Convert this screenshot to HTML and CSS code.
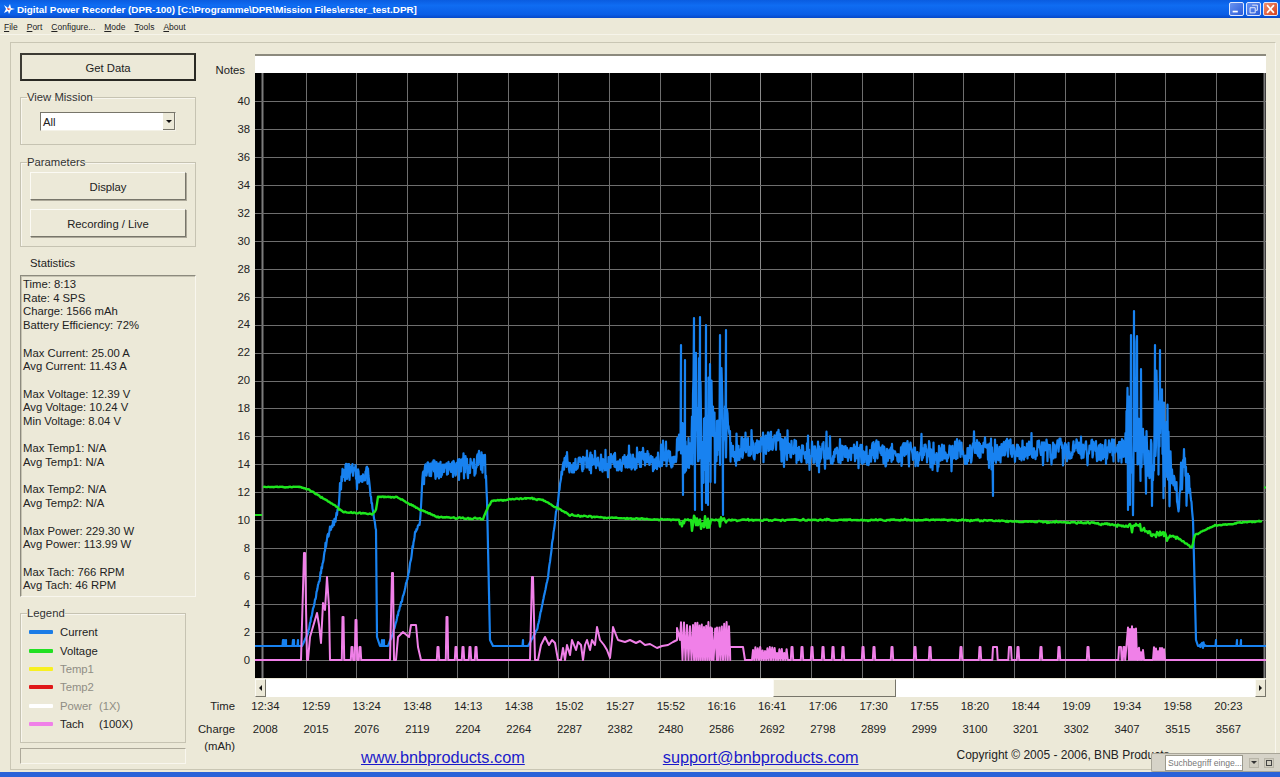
FILE: index.html
```html
<!DOCTYPE html>
<html lang="de">
<head>
<meta charset="UTF-8">
<title>Digital Power Recorder (DPR-100)</title>
<link rel="stylesheet" href="styles.css">
</head>
<body>
<div class="window">
  <div class="titlebar">
    <svg class="appicon" viewBox="0 0 12 12"><path d="M1 2 L5 5 L7 1 L8 5 L12 6 L8 7 L6 11 L5 8 L1 10 L3 6 Z" fill="#fff"/><path d="M4 5 L8 6 L5 7 Z" fill="#c33"/></svg>
    <span class="titletext">Digital Power Recorder (DPR-100) [C:\Programme\DPR\Mission Files\erster_test.DPR]</span>
    <div class="winbtns">
      <span class="winbtn"><svg viewBox="0 0 15 14"><rect x="3" y="9" width="6" height="2" fill="#fff"/></svg></span>
      <span class="winbtn"><svg viewBox="0 0 15 14"><path d="M6 2.5h6v6h-2M3.500 5.500h6v6h-6z" fill="none" stroke="#fff"/></svg></span>
      <span class="winbtn close"><svg viewBox="0 0 15 14"><path d="M3.500 2.500l8 9M11.500 2.500l-8 9" fill="none" stroke="#fff" stroke-width="2"/></svg></span>
    </div>
  </div>
  <div class="menubar">
    <span><u>F</u>ile</span>
    <span><u>P</u>ort</span>
    <span><u>C</u>onfigure...</span>
    <span><u>M</u>ode</span>
    <span><u>T</u>ools</span>
    <span><u>A</u>bout</span>
  </div>
  <div class="client">
    <div class="frame">
      <div class="sidebar">
        <button class="btn default">Get Data</button>
        <fieldset class="group mission">
          <legend>View Mission</legend>
          <div class="combo"><span>All</span><i class="combo-arrow"></i></div>
        </fieldset>
        <fieldset class="group params">
          <legend>Parameters</legend>
          <button class="btn">Display</button>
          <button class="btn">Recording / Live</button>
        </fieldset>
        <div class="stats-title">Statistics</div>
        <div class="stats">
          <p>Time: 8:13<br>Rate: 4 SPS<br>Charge: 1566 mAh<br>Battery Efficiency: 72%</p>
          <p>Max Current: 25.00 A<br>Avg Current: 11.43 A</p>
          <p>Max Voltage: 12.39 V<br>Avg Voltage: 10.24 V<br>Min Voltage: 8.04 V</p>
          <p>Max Temp1: N/A<br>Avg Temp1: N/A</p>
          <p>Max Temp2: N/A<br>Avg Temp2: N/A</p>
          <p>Max Power: 229.30 W<br>Avg Power: 113.99 W</p>
          <p>Max Tach: 766 RPM<br>Avg Tach: 46 RPM</p>
        </div>
        <fieldset class="group legendbox">
          <legend>Legend</legend>
          <div class="lg"><i class="sw blue"></i><span>Current</span></div>
          <div class="lg"><i class="sw green"></i><span>Voltage</span></div>
          <div class="lg off"><i class="sw yellow"></i><span>Temp1</span></div>
          <div class="lg off"><i class="sw red"></i><span>Temp2</span></div>
          <div class="lg off"><i class="sw white"></i><span>Power</span><span>(1X)</span></div>
          <div class="lg"><i class="sw pink"></i><span>Tach</span><span>(100X)</span></div>
        </fieldset>
        <div class="status"></div>
      </div>
      <div class="main">
        <div class="notes-row">
          <label>Notes</label>
          <div class="notes"></div>
        </div>
        <div class="chart-row">
          <div class="yaxis">
            <span>40</span><span>38</span><span>36</span><span>34</span><span>32</span><span>30</span><span>28</span>
            <span>26</span><span>24</span><span>22</span><span>20</span><span>18</span><span>16</span><span>14</span>
            <span>12</span><span>10</span><span>8</span><span>6</span><span>4</span><span>2</span><span>0</span>
          </div>
          <svg id="chart" class="chart" viewBox="255 73 1011 605"></svg>
        </div>
        <div class="hscroll">
          <span class="sb-btn"><i class="arrow-l"></i></span>
          <div class="sb-track"><div class="sb-thumb"></div></div>
          <span class="sb-btn"><i class="arrow-r"></i></span>
        </div>
        <div class="axis time">
          <label>Time</label>
          <span>12:34</span><span>12:59</span><span>13:24</span><span>13:48</span><span>14:13</span>
          <span>14:38</span><span>15:02</span><span>15:27</span><span>15:52</span><span>16:16</span>
          <span>16:41</span><span>17:06</span><span>17:30</span><span>17:55</span><span>18:20</span>
          <span>18:44</span><span>19:09</span><span>19:34</span><span>19:58</span><span>20:23</span>
        </div>
        <div class="axis charge">
          <label>Charge<br>(mAh)</label>
          <span>2008</span><span>2015</span><span>2076</span><span>2119</span><span>2204</span>
          <span>2264</span><span>2287</span><span>2382</span><span>2480</span><span>2586</span>
          <span>2692</span><span>2798</span><span>2899</span><span>2999</span><span>3100</span>
          <span>3201</span><span>3302</span><span>3407</span><span>3515</span><span>3567</span>
        </div>
        <div class="footer">
          <a href="#">www.bnbproducts.com</a>
          <a href="#">support@bnbproducts.com</a>
          <span class="copyright">Copyright © 2005 - 2006, BNB Products</span>
        </div>
      </div>
    </div>
  </div>
  <div class="taskbar"></div>
  <div class="searchbar">
    <div class="search-input">Suchbegriff einge...</div>
    <span class="search-btn"><i class="arrow-d"></i></span>
    <span class="search-btn"><i class="square"></i></span>
  </div>
</div>
<script src="chart.js"></script>
</body>
</html>
```
FILE: styles.css
```css
html, body {
    margin: 0;
    padding: 0;
    height: 777px;
    overflow: hidden;
}

body {
    font-family: "Liberation Sans", Arial, sans-serif;
    font-size: 11.3px;
    color: #222;
    background: #ece9d8;
}

.window {
    position: relative;
    display: flex;
    flex-direction: column;
    width: 1280px;
    height: 777px;
}

/* title bar */
.titlebar {
    display: flex;
    align-items: center;
    flex: none;
    height: 18px;
    padding-left: 3px;
    background: linear-gradient(#0a5ce0, #0f6cf2 30%, #0a5ee6 80%, #0648c8);
}

.appicon {
    width: 12px;
    height: 12px;
    margin-right: 2px;
}

.titletext {
    color: #fff;
    font-size: 9.85px;
    font-weight: bold;
    white-space: nowrap;
}

.winbtns {
    display: flex;
    gap: 2px;
    margin-left: auto;
    margin-right: 2px;
}

.winbtn {
    width: 15px;
    height: 14px;
    border: 1px solid #dfe8ff;
    border-radius: 2px;
    box-sizing: border-box;
    background: linear-gradient(135deg, #6a94f0, #2a5ad8);
}

.winbtn svg {
    display: block;
    width: 100%;
    height: 100%;
}

.winbtn.close {
    background: linear-gradient(135deg, #f09070, #d8401c);
}

/* menu */
.menubar {
    display: flex;
    flex: none;
    gap: 9px;
    height: 17px;
    padding-left: 4px;
    font-size: 8.5px;
    line-height: 18px;
    border-bottom: 1px solid #f6f4ea;
    box-sizing: border-box;
}

.client {
    flex: 1;
    padding: 7px 4px 2px 10px;
    min-height: 0;
}

.frame {
    display: flex;
    height: 100%;
    box-sizing: border-box;
    padding: 10px 0 0 9px;
    border-top: 1px solid #c9c6b4;
    border-left: 1px solid #c9c6b4;
    border-right: 1px solid #f8f6ee;
    border-bottom: 1px solid #c9c6b4;
}

/* left column */
.sidebar {
    display: flex;
    flex-direction: column;
    flex: none;
    width: 176px;
}

.btn {
    display: block;
    width: 156px;
    height: 28px;
    padding: 1px 0 0;
    font: 11.3px "Liberation Sans", Arial, sans-serif;
    color: #222;
    background: #ece9d8;
    border: 1px solid;
    border-color: #fbfaf4 #77756a #77756a #fbfaf4;
    box-shadow: 1px 1px 0 #aca899;
}

.btn.default {
    width: 176px;
    height: 28px;
    border: 2px solid #2e2d28;
    border-color: #3c3b34 #2a2924 #2a2924 #3c3b34;
    box-shadow: none;
}

.group {
    margin: 0;
    padding: 0;
    box-sizing: border-box;
    border: 1px solid #c6c3b2;
    box-shadow: inset 1px 1px 0 #f8f6ee;
}

.group legend {
    padding: 0;
    line-height: 14px;
    color: #333;
}

.mission {
    height: 55px;
    margin-top: 9px;
    padding: 8px 0 0 19px;
}

.mission legend {
    margin-left: -13px;
}

.combo {
    display: flex;
    align-items: center;
    justify-content: space-between;
    width: 136px;
    height: 19px;
    padding-left: 2px;
    box-sizing: border-box;
    background: #fff;
    border: 1px solid;
    border-color: #77756a #f4f2e8 #f4f2e8 #77756a;
}

.combo-arrow {
    position: relative;
    width: 12px;
    height: 17px;
    background: #ece9d8;
    border-right: 1px solid #77756a;
    border-bottom: 1px solid #77756a;
    box-sizing: border-box;
}

.combo-arrow::after {
    content: "";
    position: absolute;
    left: 3px;
    top: 7px;
    border: 3px solid transparent;
    border-top: 3px solid #111;
    border-bottom: 0;
}

.params {
    height: 92px;
    margin-top: 10px;
    padding: 3px 0 0 9px;
}

.params legend {
    margin-left: -3px;
}

.params .btn + .btn {
    margin-top: 9px;
}

.stats-title {
    margin: 9px 0 5px 10px;
    line-height: 14px;
}

.stats {
    height: 322px;
    box-sizing: border-box;
    padding: 2px 2px;
    line-height: 13.7px;
    border: 1px solid;
    border-color: #8c8a7e #f8f6ee #f8f6ee #8c8a7e;
    box-shadow: inset 1px 1px 0 #c6c3b2;
}

.stats p {
    margin: 0 0 13.7px;
}

.legendbox {
    width: 166px;
    height: 137px;
    margin-top: 9px;
    padding: 3px 0 0 8px;
}

.legendbox legend {
    margin-left: -2px;
}

.lg {
    display: flex;
    align-items: center;
    height: 18.4px;
}

.lg span:nth-of-type(1) {
    width: 39px;
    margin-left: 7px;
}

.lg.off {
    color: #8f8d84;
}

.sw {
    width: 24px;
    height: 4px;
    border-radius: 1px;
}

.sw.blue { background: #1b7ce6; }
.sw.green { background: #22e022; }
.sw.yellow { background: #f8f020; }
.sw.red { background: #e01818; }
.sw.white { background: #fff; }
.sw.pink { background: #f080e8; }

.status {
    width: 166px;
    height: 16px;
    margin-top: 5px;
    box-sizing: border-box;
    border: 1px solid;
    border-color: #aca899 #f8f6ee #f8f6ee #aca899;
}

/* right part */
.main {
    display: flex;
    flex-direction: column;
    flex: none;
    width: 1070px;
}

.notes-row {
    display: flex;
    align-items: center;
    height: 19px;
    margin-top: 1px;
}

.notes-row label {
    flex: none;
    width: 59px;
    text-align: right;
    padding-right: 10px;
    box-sizing: border-box;
    position: relative;
    top: 6px;
}

.notes {
    width: 1011px;
    height: 19px;
    box-sizing: border-box;
    background: #fff;
    border-top: 2px solid #8c8a7e;
}

.chart-row {
    display: flex;
    height: 605px;
}

.yaxis {
    display: grid;
    grid-auto-rows: 27.95px;
    align-items: center;
    width: 59px;
    padding-top: 14px;
    padding-right: 5px;
    box-sizing: border-box;
    justify-items: end;
}

.chart {
    display: block;
    width: 1011px;
    height: 605px;
    background: #000;
}

.hscroll {
    display: flex;
    width: 1011px;
    height: 18px;
    margin-left: 59px;
    margin-top: 1px;
}

.sb-btn {
    position: relative;
    flex: none;
    width: 11px;
    box-sizing: border-box;
    background: #ece9d8;
    border: 1px solid;
    border-color: #fbfaf4 #77756a #77756a #fbfaf4;
}

.arrow-l, .arrow-r {
    position: absolute;
    top: 5px;
    left: 3px;
    border: 3px solid transparent;
    border-left: 0;
    border-right: 3px solid #111;
}

.arrow-r {
    border-right: 0;
    border-left: 3px solid #111;
}

.sb-track {
    display: flex;
    flex: 1;
    padding-left: 507px;
    background: #fff;
}

.sb-thumb {
    width: 123px;
    box-sizing: border-box;
    background: #ece9d8;
    border: 1px solid;
    border-color: #fbfaf4 #77756a #77756a #fbfaf4;
}

.axis {
    display: flex;
    line-height: 14px;
}

.axis label {
    flex: none;
    width: 39px;
    margin-right: 5px;
    text-align: right;
    white-space: nowrap;
    line-height: 17px;
}

.axis span {
    flex: none;
    width: 50.7px;
    text-align: center;
}

.time {
    height: 18px;
    align-items: center;
}

.charge {
    height: 27px;
    margin-top: 1px;
    padding-top: 5px;
}

.charge span {
    margin-top: 1px;
}

.footer {
    display: flex;
    height: 18px;
    font-size: 16.3px;
    line-height: 18px;
}

.footer a {
    color: #1a1acb;
}

.footer a:nth-child(1) {
    margin-left: 165px;
}

.footer a:nth-child(2) {
    margin-left: 138px;
}

.copyright {
    position: relative;
    top: -2px;
    margin-left: 98px;
    font-size: 12px;
    white-space: nowrap;
}

.taskbar {
    flex: none;
    height: 5px;
    background: #2a62d8;
}

/* floating search bar of the desktop */
.searchbar {
    position: absolute;
    right: 0;
    bottom: 5px;
    display: flex;
    align-items: center;
    gap: 5px;
    width: 129px;
    height: 19px;
    box-sizing: border-box;
    padding-left: 13px;
    background: #d6d3c8;
    border: 1px solid #a8a598;
    border-right: 0;
    border-radius: 2px 0 0 2px;
}

.search-input {
    width: 78px;
    height: 16px;
    margin-right: 1px;
    box-sizing: border-box;
    padding-left: 2px;
    font-size: 8.6px;
    line-height: 15px;
    color: #777;
    background: #fff;
    border: 1px solid #9a988c;
    white-space: nowrap;
}

.search-btn {
    position: relative;
    width: 10px;
    height: 10px;
    background: #d0cdc0;
    border: 1px solid #b8b5a8;
    box-sizing: border-box;
}

.arrow-d {
    position: absolute;
    left: 1px;
    top: 2px;
    border: 3px solid transparent;
    border-top: 3px solid #333;
    border-bottom: 0;
}

.square {
    position: absolute;
    left: 1px;
    top: 1px;
    width: 6px;
    height: 6px;
    box-sizing: border-box;
    border: 1px solid #444;
}
```
FILE: chart.js
```js
// draws the recorder traces on the black chart (pixel coordinates of the window)
const svg = document.getElementById("chart");
const NS = "http://www.w3.org/2000/svg";

let seed = 12345;
function rnd() {
    seed = (seed * 16807) % 2147483647;
    return seed / 2147483647;
}

function line(x1, y1, x2, y2, color, width) {
    const l = document.createElementNS(NS, "line");
    l.setAttribute("x1", x1);
    l.setAttribute("y1", y1);
    l.setAttribute("x2", x2);
    l.setAttribute("y2", y2);
    l.setAttribute("stroke", color);
    l.setAttribute("stroke-width", width);
    svg.appendChild(l);
}

function poly(points, color, width) {
    const p = document.createElementNS(NS, "polyline");
    p.setAttribute("points", points.map(q => q[0].toFixed(1) + "," + q[1].toFixed(1)).join(" "));
    p.setAttribute("fill", "none");
    p.setAttribute("stroke", color);
    p.setAttribute("stroke-width", width);
    p.setAttribute("stroke-linejoin", "round");
    svg.appendChild(p);
}

// grid
const vLines = [306, 356, 407, 457, 508, 558, 609, 660, 710, 760, 811, 862, 913, 963, 1014, 1065, 1115, 1165, 1216];
for (const x of vLines) line(x + 0.5, 73, x + 0.5, 678, x === 760 ? "#8a8a8a" : "#6e6e6e", 1);
line(262.5, 73, 262.5, 678, "#7c7c7c", 2);
line(1264.5, 73, 1264.5, 678, "#7c7c7c", 2);
for (let v = 0; v <= 40; v += 2) {
    const y = Math.round(660 - v * 13.975) + 0.5;
    line(255, y, 1266, y, "#6e6e6e", 1);
}

// builds a noisy trace from knots [x, y, noise] and extra one-sample spikes [x, y]
function trace(knots, spikes, step) {
    const pts = [];
    for (let i = 0; i < knots.length - 1; i++) {
        const a = knots[i], b = knots[i + 1];
        for (let x = a[0]; x < b[0]; x += step) {
            const t = (x - a[0]) / (b[0] - a[0]);
            const amp = a[2] + (b[2] - a[2]) * t;
            let r = rnd() - 0.5;
            if (rnd() < 0.15) r *= 2;
            const slow = Math.sin(x * 0.31) * Math.sin(x * 0.07) * 0.2;
            pts.push([x, a[1] + (b[1] - a[1]) * t + amp * (r + slow)]);
        }
    }
    pts.push(knots[knots.length - 1].slice(0, 2));
    for (const s of spikes) {
        const i = pts.findIndex(q => q[0] >= s[0]);
        pts.splice(i, 0, [s[0], s[1]]);
    }
    return pts;
}

const current = trace([
    [255, 646, 0], [302, 646, 0], [308, 633, 2], [320, 577, 4], [327, 540, 6], [337, 513, 5],
    [342, 473, 18], [368, 474, 18], [371, 500, 4], [376, 530, 3], [377, 637, 0], [380, 646, 0],
    [388, 646, 0], [393, 633, 2], [408, 577, 3], [415, 533, 5], [420, 523, 5], [423, 470, 14],
    [485, 464, 24], [487, 500, 2], [490, 640, 0], [493, 646, 0], [528, 646, 0], [537, 630, 2],
    [548, 577, 2], [555, 520, 4], [562, 473, 8], [565, 465, 14], [676, 459, 18], [680, 440, 60],
    [690, 455, 35], [694, 425, 130], [710, 425, 130], [716, 450, 45], [722, 420, 110], [730, 445, 30],
    [732, 452, 24], [760, 448, 22], [775, 441, 22], [790, 447, 22], [800, 454, 20], [960, 452, 20],
    [1125, 449, 18], [1127, 420, 130], [1136, 415, 130], [1142, 450, 70], [1152, 455, 45], [1156, 420, 130],
    [1168, 445, 90], [1172, 470, 30], [1176, 490, 30], [1179, 505, 12], [1181, 470, 40], [1186, 475, 40],
    [1190, 490, 8], [1193, 520, 3], [1194, 560, 1], [1195, 600, 0], [1196, 640, 0], [1198, 646, 0],
    [1203, 644, 4], [1206, 646, 0], [1266, 646, 0]
], [
    [283, 640], [284, 640], [286, 640], [293, 640], [294, 640], [298, 640], [382, 640], [384, 640], [523, 640],
    [681, 345], [685, 360], [694, 318], [700, 317], [706, 325], [720, 335], [726, 330],
    [683, 495], [695, 510], [702, 510], [708, 505], [723, 515],
    [1134, 311], [1131, 335], [1155, 345], [1160, 350], [1128, 510], [1130, 505], [993, 496],
    [1216, 640], [1237, 640], [1241, 640]
], 0.5);

const voltage = trace([
    [263, 487, 0.5], [300, 487, 0.5], [310, 490, 1], [337, 507, 1], [343, 512, 1], [372, 514, 1],
    [376, 510, 1], [378, 497, 1], [397, 497, 1], [417, 508, 1], [437, 517, 1], [483, 519, 1.5],
    [488, 507, 1], [492, 501, 1], [527, 498, 1], [543, 500, 1], [557, 508, 1], [570, 515, 1.2],
    [610, 518, 1.2], [679, 520, 1], [680, 521, 9], [685, 521, 9], [686, 520, 1], [691, 520, 1],
    [692, 522, 12], [710, 522, 12], [711, 520, 1], [719, 520, 1], [720, 522, 10], [727, 522, 10],
    [728, 520, 1.2], [960, 520, 1.2], [1093, 523, 1.2], [1127, 526, 2], [1128, 527, 9], [1140, 529, 8],
    [1150, 532, 2], [1152, 533, 7], [1165, 536, 7], [1177, 537, 1.5], [1192, 548, 1], [1195, 535, 1],
    [1213, 526, 1], [1237, 523, 1], [1262, 521, 1]
], [], 1);

// tach: hand placed pulses on the zero line
const tach = [[255, 660]];
function pulse(x, top, w) {
    const half = (w || 1) / 2;
    tach.push([x - half - 0.7, 660], [x - half, top], [x + half, top], [x + half + 0.7, 660]);
}
function comb(x0, x1, top, step) {
    for (let x = x0; x < x1; x += step) {
        const h = top + rnd() * 6;
        tach.push([x, h], [x + step / 2, 660]);
    }
}
tach.push([301, 660], [304, 553], [305, 553], [307, 660], [308, 660], [310, 637], [317, 613], [319, 625],
    [321, 643], [323, 603], [325, 610], [327, 577], [329, 607], [330, 660]);
pulse(343, 617); pulse(352, 647); pulse(356, 620); pulse(360, 647);
tach.push([390, 660], [392, 573], [393, 573], [394, 660], [396, 660], [398, 637], [403, 632], [409, 637],
    [411, 625], [416, 625], [418, 647], [421, 660]);
pulse(438, 647); pulse(447, 617); pulse(456, 647); pulse(463, 647); pulse(470, 647); pulse(476, 647);
tach.push([530, 660], [532, 577], [533, 577], [535, 660], [538, 660], [541, 645], [545, 637], [549, 645],
    [552, 640], [555, 643], [558, 660], [561, 660], [563, 648], [565, 660], [567, 645], [570, 655],
    [572, 640], [576, 650], [578, 642], [581, 645], [583, 660], [585, 645], [587, 640], [590, 650],
    [592, 640], [595, 645], [597, 627], [600, 640], [604, 645], [607, 650], [610, 658], [612, 640],
    [613, 627], [616, 635], [618, 640], [625, 642], [630, 640], [636, 643], [640, 641], [645, 645],
    [650, 644], [657, 648], [662, 646], [668, 645], [673, 642], [677, 640], [677, 628], [680, 640]);
comb(681, 691, 622, 3);
comb(693, 712, 622, 2.2);
comb(712, 717, 624, 3.2);
comb(717, 729, 622, 2.4);
tach.push([730, 647], [743, 647], [745, 660], [752, 660]);
comb(753, 788, 647, 2.4);
tach.push([789, 660]);
for (const x of [792, 802, 812, 823, 833, 843, 863, 874, 892, 915, 930, 961, 980]) pulse(x, 647);
pulse(995, 647, 4); pulse(1010, 647, 2); pulse(1018, 647); pulse(1041, 647);
pulse(1059, 647); pulse(1088, 647);
pulse(1120, 647, 2); pulse(1124, 647);
comb(1128, 1137, 625, 2);
comb(1137, 1145, 647, 2);
tach.push([1145, 660], [1153, 660]);
comb(1154, 1166, 647, 2);
tach.push([1166, 660], [1266, 660]);

// short stubs at the edges of the plot
line(255, 515, 262, 515, "#1ee01e", 2);
line(1264, 487.5, 1266, 487.5, "#1ee01e", 2);

poly(current, "#1882f0", 2.2);
poly(voltage, "#1ee61e", 2.4);
poly(tach, "#f080e8", 2);
```
